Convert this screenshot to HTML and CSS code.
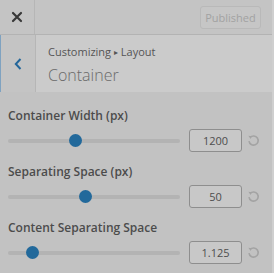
FILE: index.html
```html
<!DOCTYPE html>
<html lang="en">
  <head>
    <meta charset="UTF-8" />
    <meta name="viewport" content="width=device-width, initial-scale=1.0" />
    <title>Customizing Container</title>
    <link rel="stylesheet" href="styles.css">
  </head>
  <body>
    <div class="panel">
      <div class="header">
        <button class="close" aria-label="Close">
          <svg width="12" height="12" viewBox="0 0 12 12">
            <path d="M2 2 L10 10 M10 2 L2 10" stroke="#383838" stroke-width="2.2" stroke-linecap="round" />
          </svg>
        </button>
        <button class="published" disabled>Published</button>
      </div>

      <div class="section-head">
        <button class="back" aria-label="Back">
          <svg width="8" height="12" viewBox="0 0 8 12">
            <path d="M6.5 1 L1.8 6 L6.5 11" fill="none" stroke="#23669a" stroke-width="2" />
          </svg>
        </button>
        <div class="section-info">
          <div class="crumbs">Customizing <span class="arrow">&#9656;</span> Layout</div>
          <div class="section-title">Container</div>
        </div>
      </div>

      <div class="controls">
        <div class="control">
          <div class="control-label">Container Width (px)</div>
          <div class="control-row">
            <div class="track"><div class="thumb" style="left: 39.5%"></div></div>
            <input class="value" type="text" value="1200" />
            <span class="reset">
              <svg width="13" height="13" viewBox="0 0 13 13">
                <path d="M3.2 3.4 A4.6 4.6 0 1 1 2 7.2" fill="none" stroke="#a3a3a3" stroke-width="1.6" />
                <path d="M1.4 1.8 L4.6 2.2 L3.6 5 Z" fill="#a3a3a3" />
              </svg>
            </span>
          </div>
        </div>

        <div class="control">
          <div class="control-label">Separating Space (px)</div>
          <div class="control-row">
            <div class="track"><div class="thumb" style="left: 45.3%"></div></div>
            <input class="value" type="text" value="50" />
            <span class="reset">
              <svg width="13" height="13" viewBox="0 0 13 13">
                <path d="M3.2 3.4 A4.6 4.6 0 1 1 2 7.2" fill="none" stroke="#a3a3a3" stroke-width="1.6" />
                <path d="M1.4 1.8 L4.6 2.2 L3.6 5 Z" fill="#a3a3a3" />
              </svg>
            </span>
          </div>
        </div>

        <div class="control">
          <div class="control-label">Content Separating Space</div>
          <div class="control-row">
            <div class="track"><div class="thumb" style="left: 14%"></div></div>
            <input class="value" type="text" value="1.125" />
            <span class="reset">
              <svg width="13" height="13" viewBox="0 0 13 13">
                <path d="M3.2 3.4 A4.6 4.6 0 1 1 2 7.2" fill="none" stroke="#a3a3a3" stroke-width="1.6" />
                <path d="M1.4 1.8 L4.6 2.2 L3.6 5 Z" fill="#a3a3a3" />
              </svg>
            </span>
          </div>
        </div>
      </div>
    </div>
  </body>
</html>
```

FILE: styles.css
```css
/* Dimmed customizer sidebar */
body {
  font-family: "Open Sans", sans-serif;
  background-color: #cfcfcf;
  margin: 0;
  padding: 0;
}

.panel {
  width: 272px;
  height: 273px;
  background: #c2c2c2;
}

button {
  font-family: inherit;
  padding: 0;
  margin: 0;
  background: none;
  border: none;
}

.header {
  display: flex;
  align-items: center;
  height: 34px;
  background: #c4c4c4;
  border-bottom: 1px solid #b3b3b3;
}

.close {
  display: flex;
  align-items: center;
  justify-content: center;
  width: 35px;
  height: 34px;
  border-right: 1px solid #b6b6b6;
}

.published {
  margin-left: auto;
  margin-right: 11px;
  width: 61px;
  height: 23px;
  border: 1px solid #b9b9b9;
  border-radius: 3px;
  background: #c6c6c6;
  color: #a2a2a2;
  font-size: 11px;
}

.section-head {
  display: flex;
  height: 57px;
  background: #cbcbcb;
}

.back {
  display: flex;
  align-items: center;
  justify-content: center;
  width: 36px;
  height: 57px;
  background: #c4c4c4;
  border-left: 1px solid #7fa2c0;
  border-right: 1px solid #b6b6b6;
  box-sizing: border-box;
}

.section-info {
  padding: 9px 0 0 12px;
}

.crumbs {
  font-size: 11px;
  line-height: 16px;
  color: #555;
}

.crumbs .arrow {
  font-size: 8px;
  vertical-align: 1px;
}

.section-title {
  font-size: 16px;
  font-weight: 300;
  line-height: 24px;
  margin-top: 3px;
  color: #6a6a6a;
}

.controls {
  padding: 16px 0 0 8px;
}

.control {
  margin-bottom: 12px;
}

.control-label {
  font-size: 12px;
  font-weight: 600;
  line-height: 16px;
  color: #4c4c4c;
}

.control-row {
  display: flex;
  align-items: center;
  margin-top: 5px;
  height: 23px;
}

.track {
  position: relative;
  width: 172px;
  height: 4px;
  border-radius: 2px;
  background: #b3b3b3;
}

.thumb {
  position: absolute;
  top: -4.5px;
  width: 13px;
  height: 13px;
  margin-left: -6.5px;
  border-radius: 50%;
  background: #22699b;
}

.value {
  margin-left: 9px;
  width: 53px;
  height: 23px;
  box-sizing: border-box;
  border: 1px solid #8e8e8e;
  border-radius: 3px;
  background: #c8c8c8;
  font-family: inherit;
  font-size: 11px;
  color: #4e4e4e;
  text-align: center;
  padding: 0;
}

.reset {
  display: flex;
  margin-left: 5px;
}
```
